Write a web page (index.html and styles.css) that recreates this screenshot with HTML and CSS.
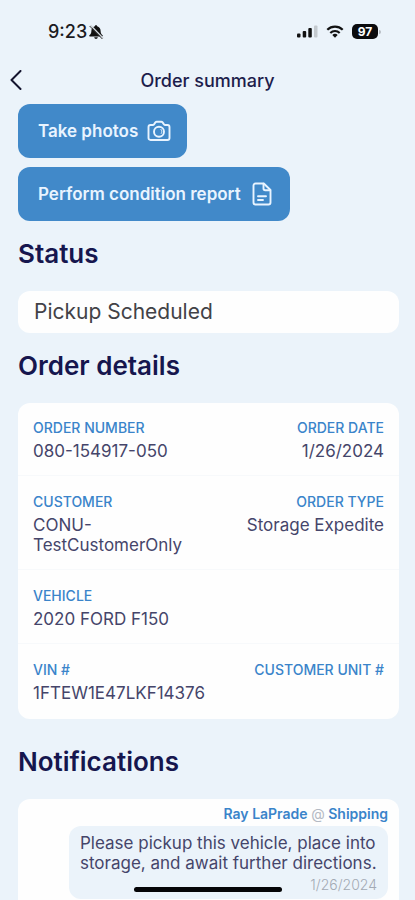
FILE: index.html
```html
<!DOCTYPE html>
<html lang="en">
<head>
<meta charset="utf-8">
<meta name="viewport" content="width=device-width, initial-scale=1">
<title>Order summary</title>
<link rel="stylesheet" href="styles.css">
</head>
<body>
<div class="app">
  <div class="status-bar">
    <div class="status-group">
      <span class="clock">9:23</span>
      <svg class="bell" viewBox="0 0 16 16" width="16" height="16" aria-hidden="true">
        <path d="M8 1.2c-.8 0-1.200.5-1.200 1.100C4.700 2.900 3.400 4.700 3.400 6.700c0 2.400-.7 3.500-2 4.500-.5.5-.2 1.200.5 1.200h12.200c.7 0 1-.7.5-1.200-1.300-1-2-2.100-2-4.500 0-2-1.300-3.800-3.400-4.400C9.200 1.700 8.800 1.200 8 1.200z" fill="#111"/>
        <path d="M6.200 13.300h3.600c-.2 1-.9 1.600-1.800 1.600s-1.600-.6-1.800-1.600z" fill="#111"/>
        <path d="M2.600 1.300l12.600 13" stroke="#cfd6dc" stroke-width="1.400"/>
        <path d="M1.600 2l12.800 13" stroke="#333" stroke-width="1"/>
      </svg>
    </div>
    <div class="status-group status-group-end">
      <svg viewBox="0 0 21 13" width="21" height="13" aria-hidden="true">
        <rect x="0" y="8.500" width="3.500" height="4" rx="1" fill="#111"/>
        <rect x="5.700" y="6" width="3.500" height="6.500" rx="1" fill="#111"/>
        <rect x="11.300" y="3" width="3.500" height="9.500" rx="1" fill="#111"/>
        <rect x="17" y="0.500" width="3.500" height="12" rx="1" fill="#c3c9ce"/>
      </svg>
      <svg viewBox="0 0 18 13" width="18" height="13" aria-hidden="true">
        <path d="M1.300 4.700a11 11 0 0 1 15.400 0" fill="none" stroke="#111" stroke-width="2.200"/>
        <path d="M4.300 7.900a6.700 6.700 0 0 1 9.400 0" fill="none" stroke="#111" stroke-width="2.100"/>
        <path d="M9 12.800l-2.700-2.700a3.900 3.900 0 0 1 5.400 0z" fill="#111"/>
      </svg>
      <div class="battery"><span class="battery-level">97</span></div>
    </div>
  </div>

  <header class="nav">
    <button class="back" type="button" aria-label="Back">
      <svg viewBox="0 0 12 20" width="12" height="20" aria-hidden="true">
        <path d="M10.500 1L1.500 10l9 9" fill="none" stroke="#14142e" stroke-width="2" stroke-linecap="round" stroke-linejoin="round"/>
      </svg>
    </button>
    <h1 class="title">Order summary</h1>
  </header>

  <main class="content">
    <div class="actions">
      <button class="action" type="button">
        Take photos
        <svg viewBox="0 0 24 24" width="24" height="24" fill="none" stroke="#e9f4ff" stroke-width="1.900" stroke-linejoin="round" aria-hidden="true">
          <path d="M3.500 6h2.400c.5 0 .8-.2 1.100-.6l1.400-2c.3-.4.700-.7 1.300-.7h4.600c.6 0 1 .3 1.300.7l1.400 2c.3.4.6.6 1.100.6h2.400c1.200 0 2 .8 2 2v11c0 1.200-.8 2-2 2h-17c-1.200 0-2-.8-2-2V8c0-1.200.8-2 2-2z"/>
          <circle cx="12" cy="12.800" r="5"/>
          <path d="M14 10.400c1 1.200 1.100 2.700.3 4" stroke-width="1" stroke-linecap="round"/>
        </svg>
      </button>
      <button class="action" type="button">
        Perform condition report
        <svg viewBox="0 0 24 24" width="24" height="24" fill="none" stroke="#e9f4ff" stroke-width="1.900" stroke-linejoin="round" stroke-linecap="round" aria-hidden="true">
          <path d="M5.500 1.500h8.300L20.500 8v12.500c0 1.200-.8 2-2 2h-13c-1.200 0-2-.8-2-2v-17c0-1.200.8-2 2-2z"/>
          <path d="M13.500 1.800v4.700c0 1.100.6 1.700 1.700 1.700h5"/>
          <path d="M8 14.300h8M8 18h5"/>
        </svg>
      </button>
    </div>

    <section>
      <h2 class="heading">Status</h2>
      <p class="card status-value">Pickup Scheduled</p>
    </section>

    <section>
      <h2 class="heading">Order details</h2>
      <div class="card details">
        <dl class="row">
          <div class="field"><dt>ORDER NUMBER</dt><dd>080-154917-050</dd></div>
          <div class="field field-end"><dt>ORDER DATE</dt><dd>1/26/2024</dd></div>
        </dl>
        <dl class="row">
          <div class="field"><dt>CUSTOMER</dt><dd>CONU-<br>TestCustomerOnly</dd></div>
          <div class="field field-end"><dt>ORDER TYPE</dt><dd>Storage Expedite</dd></div>
        </dl>
        <dl class="row">
          <div class="field"><dt>VEHICLE</dt><dd>2020 FORD F150</dd></div>
        </dl>
        <dl class="row">
          <div class="field"><dt>VIN #</dt><dd>1FTEW1E47LKF14376</dd></div>
          <div class="field field-end"><dt>CUSTOMER UNIT #</dt><dd></dd></div>
        </dl>
      </div>
    </section>

    <section>
      <h2 class="heading">Notifications</h2>
      <div class="card feed">
        <p class="sender">Ray LaPrade <span class="at">@</span> Shipping</p>
        <div class="bubble">
          <p class="message">Please pickup this vehicle, place into storage, and await further directions.</p>
          <time class="date" datetime="2024-01-26">1/26/2024</time>
        </div>
      </div>
    </section>
  </main>
  <div class="home-indicator"></div>
</div>
</body>
</html>
```

FILE: styles.css
```css
* {
  box-sizing: border-box;
}

body,
h1,
h2,
p,
dl,
dd {
  margin: 0;
}

body {
  background: #ebf3fa;
  color: #45456a;
  font-family: Inter, "Liberation Sans", sans-serif;
}

button {
  border: 0;
  font: inherit;
  cursor: pointer;
}

svg {
  display: block;
  flex: none;
}

.app {
  position: relative;
  display: flex;
  flex-direction: column;
  height: 100vh;
  overflow: hidden;
}

.status-bar {
  display: flex;
  flex: none;
  align-items: center;
  justify-content: space-between;
  height: 60px;
  padding: 3px 34px 0 48px;
}

.status-group {
  display: flex;
  align-items: center;
}

.status-group-end {
  gap: 8px;
}

.clock {
  color: #1b1b1f;
  font-size: 18px;
  font-weight: 500;
}

.bell {
  margin-left: 1px;
}

.battery {
  display: flex;
  align-items: center;
}

.battery::after {
  width: 2px;
  height: 4px;
  margin-left: 1px;
  border-radius: 0 2px 2px 0;
  background: #b6bcc2;
  content: "";
}

.battery-level {
  width: 26px;
  border-radius: 5px;
  background: #0b0b0d;
  color: #fff;
  font-size: 12px;
  font-weight: 700;
  line-height: 15px;
  text-align: center;
}

.nav {
  display: grid;
  flex: none;
  grid-template-columns: 32px 1fr 32px;
  align-items: center;
  height: 40px;
}

.back {
  padding: 0 0 0 10px;
  background: none;
}

.title {
  color: #1d1d4c;
  font-size: 18px;
  font-weight: 500;
  text-align: center;
}

.content {
  flex: 1;
  min-height: 0;
  padding: 4px 16px 24px 18px;
  overflow-y: auto;
  scrollbar-width: none;
}

.actions {
  display: flex;
  flex-direction: column;
  align-items: flex-start;
  gap: 9px;
}

.action {
  display: flex;
  align-items: center;
  gap: 9px;
  height: 54px;
  padding: 0 16px 0 20px;
  border-radius: 12px;
  background: #4189c9;
  color: #e9f4ff;
  font-size: 17px;
  font-weight: 600;
}

.heading {
  padding: 16px 0 20px;
  color: #16164e;
  font-size: 26px;
  font-weight: 600;
  line-height: 34px;
}

.card {
  border-radius: 12px;
  background: #fefefe;
}

.status-value {
  padding: 8px 16px;
  color: #424247;
  font-size: 21px;
  line-height: 26px;
}

.details {
  margin-bottom: 10px;
  padding-bottom: 2px;
}

.row {
  display: flex;
  justify-content: space-between;
  padding: 15px 15px 14px;
}

.row + .row {
  padding-top: 16px;
  border-top: 1px solid #f7f9fb;
}

.field-end {
  text-align: right;
}

dt {
  color: #3a84ca;
  font-size: 14px;
  font-weight: 500;
  line-height: 20px;
}

dd {
  padding-top: 3px;
  font-size: 17px;
  line-height: 20px;
}

.feed {
  display: flex;
  flex-direction: column;
  align-items: flex-end;
  padding: 6px 11px 24px 51px;
}

.sender {
  color: #3a84ca;
  font-size: 14px;
  font-weight: 600;
  line-height: 18px;
}

.at {
  color: #b4bac4;
  font-weight: 400;
}

.bubble {
  margin-top: 3px;
  padding: 7px 11px 6px;
  border-radius: 12px;
  background: #ebf3fa;
}

.message {
  font-size: 17px;
  line-height: 20px;
}

.date {
  display: block;
  padding-top: 4px;
  color: #a3aab4;
  font-size: 14px;
  font-weight: 300;
  line-height: 16px;
  text-align: right;
}

.home-indicator {
  position: absolute;
  bottom: 8px;
  left: 50%;
  width: 148px;
  height: 5px;
  border-radius: 3px;
  background: #050507;
  transform: translateX(-50%);
}
```
